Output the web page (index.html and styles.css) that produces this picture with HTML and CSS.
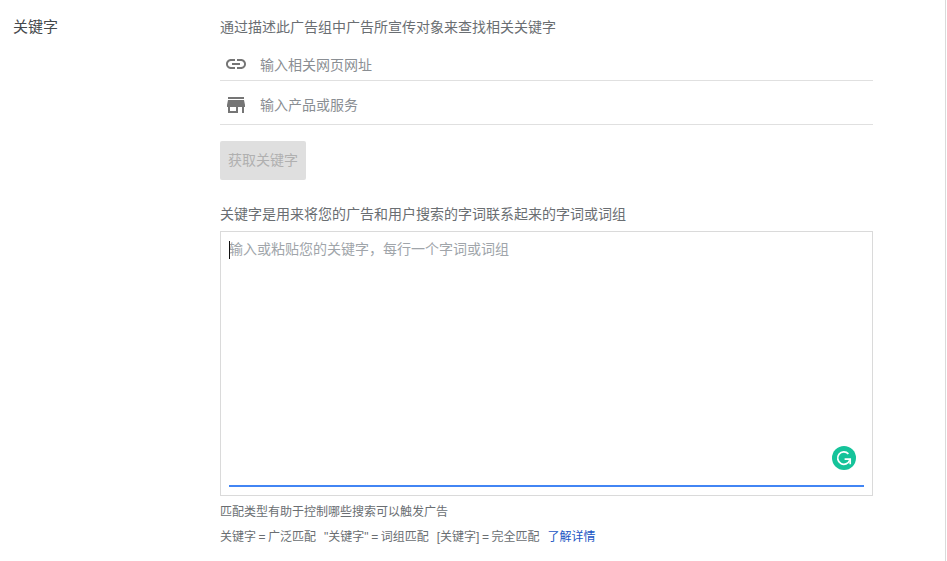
FILE: index.html
```html
<!DOCTYPE html>
<html lang="zh-CN">
<head>
<meta charset="utf-8">
<title>关键字</title>
<link rel="stylesheet" href="styles.css">
</head>
<body>
<div class="page">
  <div class="section-label">关键字</div>
  <div class="section-body">
    <div class="intro">通过描述此广告组中广告所宣传对象来查找相关关键字</div>
    <div class="field field-url">
      <svg class="icon" viewBox="0 0 24 24"><path d="M3.9 12c0-1.71 1.39-3.1 3.1-3.1h4V7H7c-2.76 0-5 2.24-5 5s2.24 5 5 5h4v-1.9H7c-1.71 0-3.1-1.39-3.1-3.1zM8 13h8v-2H8v2zm9-6h-4v1.9h4c1.71 0 3.1 1.39 3.1 3.1s-1.39 3.1-3.1 3.1h-4V17h4c2.76 0 5-2.24 5-5s-2.24-5-5-5z"/></svg>
      <span class="placeholder">输入相关网页网址</span>
    </div>
    <div class="field field-product">
      <svg class="icon icon-store" viewBox="0 0 24 24"><path d="M20 4H4v2h16V4zm1 10v-2l-1-5H4l-1 5v2h1v6h10v-6h4v6h2v-6h1zm-9 4H6v-4h6v4z"/></svg>
      <span class="placeholder">输入产品或服务</span>
    </div>
    <button class="get-btn" type="button" disabled>获取关键字</button>
    <div class="hint">关键字是用来将您的广告和用户搜索的字词联系起来的字词或词组</div>
    <div class="editor">
      <div class="editor-text"><span class="caret"></span>输入或粘贴您的关键字，每行一个字词或词组</div>
      <div class="grammarly">
        <svg viewBox="0 0 24 24" width="24" height="24"><circle cx="12" cy="12" r="12" fill="#15c39a"/><path d="M16.4 7.8A6.2 6.2 0 1 0 17.7 14.2" fill="none" stroke="#fff" stroke-width="1.7"/><path d="M12.6 13.2h5.6v5" fill="none" stroke="#fff" stroke-width="1.7"/></svg>
      </div>
      <div class="editor-line"></div>
    </div>
    <div class="note">匹配类型有助于控制哪些搜索可以触发广告</div>
    <div class="note note-types"><span>关键字 = 广泛匹配</span><span>"关键字" = 词组匹配</span><span>[关键字] = 完全匹配</span><a class="more" href="#">了解详情</a></div>
  </div>
</div>
<div class="scroll-edge"></div>
</body>
</html>
```
FILE: styles.css
```css
html, body {
  margin: 0;
  padding: 0;
  height: 561px;
  overflow: hidden;
  background: #fff;
}
body {
  font-family: "Liberation Sans", "Noto Sans CJK SC", sans-serif;
  font-weight: 400;
  color: #6a6e72;
  display: flex;
}
.page {
  width: 945px;
  display: flex;
  box-sizing: border-box;
  padding-left: 13px;
}
.scroll-edge {
  width: 1px;
  height: 561px;
  background: #dadada;
}
.section-label {
  width: 207px;
  flex: none;
  font-size: 15px;
  line-height: 22px;
  padding-top: 16px;
  color: #45494c;
}
.section-body {
  width: 653px;
  flex: none;
}
.intro {
  font-size: 14px;
  line-height: 20px;
  padding-top: 17px;
  height: 31px;
}
.field {
  display: flex;
  align-items: center;
  box-sizing: border-box;
  border-bottom: 1px solid #e0e0e0;
  font-size: 14px;
}
.field-url {
  height: 33px;
}
.field-url .placeholder {
  padding-top: 2px;
}
.field-product {
  height: 44px;
}
.icon {
  width: 24px;
  height: 24px;
  fill: #757575;
  margin-left: 4px;
  margin-right: 12px;
  flex: none;
}
.icon-store {
  margin-top: 5px;
}
.placeholder {
  color: #8a8e93;
  line-height: 20px;
}
.field-product .placeholder {
  padding-top: 4px;
}
.get-btn {
  display: block;
  margin: 16px 0 0;
  padding: 0 0 4px;
  width: 86px;
  height: 39px;
  border: 0;
  border-radius: 2px;
  background: #dfdfdf;
  color: #b0b0b0;
  font: inherit;
  font-size: 14px;
}
.hint {
  font-size: 14px;
  line-height: 20px;
  margin-top: 24px;
}
.editor {
  position: relative;
  box-sizing: border-box;
  height: 265px;
  margin-top: 7px;
  border: 1px solid #dadada;
}
.editor-text {
  font-size: 14px;
  line-height: 20px;
  color: #a0a5aa;
  padding: 7px 8px 0;
  position: relative;
}
.caret {
  position: absolute;
  left: 8px;
  top: 9px;
  width: 1px;
  height: 18px;
  background: #111;
}
.grammarly {
  position: absolute;
  right: 16px;
  top: 214px;
  width: 24px;
  height: 24px;
}
.editor-line {
  position: absolute;
  left: 8px;
  right: 8px;
  bottom: 8px;
  height: 2px;
  background: #4285f4;
}
.note {
  font-size: 12px;
  line-height: 18px;
  margin-top: 7px;
}
.note-types {
  display: flex;
  gap: 8px;
  margin-top: 7px;
  white-space: nowrap;
  word-spacing: -0.8px;
}
.more {
  color: #1a56c4;
  text-decoration: none;
}
```
